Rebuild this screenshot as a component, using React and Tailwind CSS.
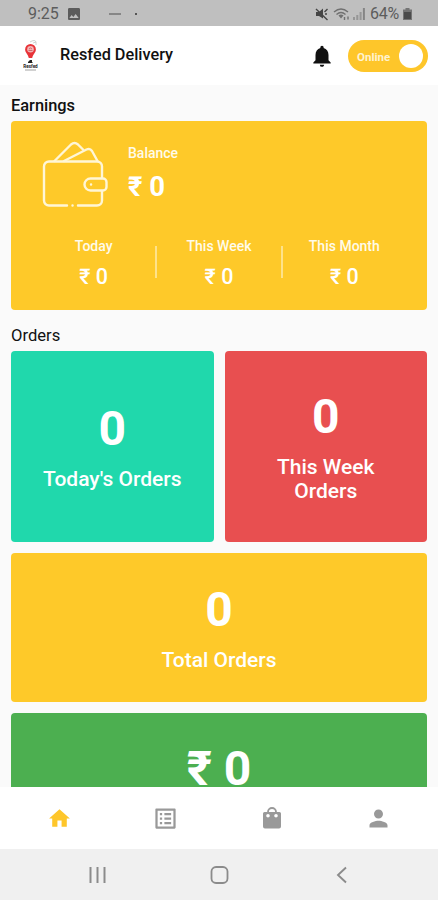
import { useState } from 'react';
import { MdHome, MdListAlt, MdNotifications, MdPerson, MdPhoto } from 'react-icons/md';

const EARNINGS = [
  { label: 'Today', value: '₹ 0' },
  { label: 'This Week', value: '₹ 0' },
  { label: 'This Month', value: '₹ 0' },
];

function BagIcon({ className }) {
  return (
    <svg className={className} viewBox="0 0 24 24" fill="none">
      <path d="M8 8V6a4 4 0 0 1 8 0v2" stroke="currentColor" strokeWidth="1.800" />
      <path
        fillRule="evenodd"
        d="M4.500 6h15A1.500 1.500 0 0 1 21 7.500v13a2 2 0 0 1-2 2H5a2 2 0 0 1-2-2v-13A1.500 1.500 0 0 1 4.500 6zM8 8a1.800 1.800 0 1 0 0 3.600A1.800 1.800 0 0 0 8 8zm8 0a1.800 1.800 0 1 0 0 3.600A1.800 1.800 0 0 0 16 8z"
        fill="currentColor"
      />
    </svg>
  );
}

const TABS = [
  { id: 'home', icon: MdHome, size: 'h-[25px] w-[25px]' },
  { id: 'orders', icon: MdListAlt, size: 'h-[27px] w-[27px]' },
  { id: 'bag', icon: BagIcon, size: 'h-6 w-6' },
  { id: 'profile', icon: MdPerson, size: 'h-[27px] w-[27px]' },
];

function StatusBar() {
  return (
    <div className="flex h-[26px] shrink-0 items-center justify-between bg-[#bfbfbf] pr-[26px] pl-7 text-[#5c5c5c]">
      <div className="flex items-center pt-[2px]">
        <span className="w-[32px] text-[16px] leading-none">9:25</span>
        <MdPhoto className="ml-[6px] h-4 w-4" />
        <span className="ml-[27px] h-[1.5px] w-3 bg-[#868686]" />
        <span className="ml-[14px] h-[2px] w-[2px] bg-[#555]" />
      </div>
      <div className="flex items-center pt-[2px]">
        <svg className="h-[13px] w-[14px]" viewBox="0 0 14 13" fill="#454545">
          <path d="M1 4h3l4-3.500v10L4 8H1z" />
          <path d="M1 1l11.500 11M9.500 4l3-3M10 6h2" stroke="#454545" strokeWidth="1.4" />
        </svg>
        <svg className="ml-[4px] h-[13px] w-[18px]" viewBox="0 0 18 13" fill="none" stroke="#707070" strokeWidth="1.4">
          <path d="M1 4q7-6 14 0M3.500 6.500q4.500-4 9 0" />
          <path d="M5.500 7.500q2.500-2 5 0L8 10.500z" fill="#707070" stroke="none" />
          <path d="M11.500 9v3M15 8.500v3" />
        </svg>
        <svg className="ml-[2px] h-[12px] w-[12px]" viewBox="0 0 12 12" fill="#858585">
          <path d="M0 9h2v3H0zM3.300 7h2v5h-2zM6.600 4h2v8h-2z" opacity=".7" />
          <path d="M9.900 0h2v12h-2z" />
        </svg>
        <span className="ml-[5px] w-[31px] text-[16px] leading-none tracking-[-0.3px]">64%</span>
        <svg className="ml-[2px] h-[12px] w-[9px]" viewBox="0 0 9 12" fill="#4b4b4b">
          <path d="M2.500 0h4v1.500H9V12H0V1.500h2.500z" opacity=".65" />
          <path d="M1 4h7v7H1z" />
        </svg>
      </div>
    </div>
  );
}

function Logo() {
  return (
    <svg className="h-8 w-4" viewBox="0 0 16 32" fill="none">
      <path d="M7 2q5-3 6 0v3M10 3l3-1" stroke="#c4c9c7" strokeWidth=".8" />
      <path d="M7.500 4a5.400 5.400 0 0 0-5.400 5.400c0 3.200 3 4.600 3.700 8.600h3.400c.7-4 3.700-5.400 3.700-8.600A5.400 5.400 0 0 0 7.500 4z" fill="#e83338" />
      <circle cx="7.500" cy="9.300" r="3.300" fill="#f2b5b6" />
      <path d="M5.500 10.500h4M6 9q1.500-2 3 0" stroke="#c9575b" strokeWidth=".8" />
      <path d="M5 22l2-2h2v2l1 1H5z" fill="#222" />
      <text x="7.500" y="28" textAnchor="middle" fontSize="4.600" fontWeight="700" fill="#222">Resfed</text>
      <path d="M2 30h11" stroke="#999" strokeWidth=".9" />
    </svg>
  );
}

function Header({ online, onToggle }) {
  return (
    <header className="flex h-[59px] shrink-0 items-center bg-white pr-[10px] pl-[23px]">
      <Logo />
      <h1 className="ml-[21px] flex-1 text-[16.3px] font-medium text-[#111]">Resfed Delivery</h1>
      <MdNotifications className="h-[26px] w-[26px] text-[#111]" />
      <button
        onClick={onToggle}
        className="ml-[13px] flex h-8 w-20 items-center justify-between rounded-full bg-[#fec62a] pr-[5px] pl-[9px]"
        aria-label="Toggle availability"
      >
        <span className="pt-[2px] text-[11.5px] leading-4 font-bold text-[#fff3cf]">{online ? 'Online' : 'Offline'}</span>
        <span className="h-6 w-6 rounded-full bg-white" />
      </button>
    </header>
  );
}

function Wallet() {
  return (
    <svg className="h-[68px] w-[66px]" viewBox="0 0 66 68" fill="none" stroke="#fff6d6" strokeWidth="2.400" strokeLinecap="round" strokeLinejoin="round">
      <path d="M25 64.500H7a5 5 0 0 1-5-5v-34a5 5 0 0 1 5-5h48a5 5 0 0 1 5 5V37M60 50v9.500a5 5 0 0 1-5 5H36M30.500 64.500h.1" />
      <path d="M12.500 20L29 3.500q3.500-3 7 0l5 5M22 20L44.500 8.500q3.500-1.500 5.500 1.500L55.500 20" />
      <path d="M61 37.500H48.500a6 6 0 0 0 0 12H61a3.500 3.500 0 0 0 3.500-3.500v-5a3.500 3.500 0 0 0-3.500-3.500zM49 43.500h.1" />
    </svg>
  );
}

function EarningsCard() {
  return (
    <section className="h-[189px] shrink-0 rounded-[4px] bg-[#fec929] px-5 pt-5 text-[#fffbea]">
      <div className="flex h-[68px] pl-[11px]">
        <Wallet />
        <div className="pt-[3px] pl-5">
          <div className="text-[14px] leading-[18px] font-medium">Balance</div>
          <div className="mt-[9px] text-[27.5px] leading-8 font-bold text-white">₹ 0</div>
        </div>
      </div>
      <div className="mt-[29px] flex items-center">
        {EARNINGS.map((e, i) => (
          <div key={e.label} className={`relative flex flex-1 flex-col items-center ${i > 0 ? 'before:absolute before:top-[8px] before:left-[-1px] before:h-8 before:w-[2px] before:bg-[#fee28a]' : ''}`}>
            <span className="text-[14px] leading-4 font-medium">{e.label}</span>
            <span className="mt-[11px] text-[21.5px] leading-6 font-medium text-white">{e.value}</span>
          </div>
        ))}
      </div>
    </section>
  );
}

function OrderCard({ value, label, className }) {
  return (
    <div className={`flex shrink-0 flex-col items-center rounded-[4px] text-center text-white ${className}`}>
      <span className="text-[48px] leading-9 font-bold">{value}</span>
      {label && <span className="mt-[20px] max-w-[139px] text-[21px] leading-6 font-medium">{label}</span>}
    </div>
  );
}

function TabBar({ active, onChange }) {
  return (
    <nav className="flex h-[62px] shrink-0 items-center bg-white px-[6px]">
      {TABS.map(({ id, icon: Icon, size }) => (
        <button key={id} onClick={() => onChange(id)} className="flex flex-1 justify-center" aria-label={id}>
          <Icon className={`${size} ${active === id ? 'text-[#fec62a]' : 'text-[#999]'}`} />
        </button>
      ))}
    </nav>
  );
}

function SystemBar() {
  return (
    <div className="flex h-[51px] shrink-0 items-center justify-between bg-[#f0f0f0] px-[89px]">
      <svg className="h-5 w-[17px]" viewBox="0 0 17 20" stroke="#8b8b8b" strokeWidth="2">
        <path d="M1.500 2v16M8.500 2v16M15.500 2v16" />
      </svg>
      <svg className="h-5 w-[19px]" viewBox="0 0 19 20" fill="none" stroke="#8b8b8b" strokeWidth="1.800">
        <rect x="1.500" y="2" width="16" height="16" rx="4.500" />
      </svg>
      <svg className="h-5 w-[17px]" viewBox="0 0 17 20" fill="none" stroke="#8b8b8b" strokeWidth="1.900">
        <path d="M14 2.500L6 10l8 7.500" />
      </svg>
    </div>
  );
}

export default function App() {
  const [online, setOnline] = useState(true);
  const [tab, setTab] = useState('home');

  return (
    <div className="flex h-[900px] w-[438px] flex-col overflow-hidden bg-[#fafafa] font-['Roboto','Noto_Sans',sans-serif]">
      <StatusBar />
      <Header online={online} onToggle={() => setOnline(!online)} />
      <main className="flex min-h-0 flex-1 flex-col overflow-hidden px-[11px] pt-[9px]">
        <h2 className="mb-[3px] text-[16.4px] leading-6 font-medium text-[#111]">Earnings</h2>
        <EarningsCard />
        <h2 className="mt-[14px] mb-[3px] text-[16.6px] leading-6 text-[#111]">Orders</h2>
        <div className="grid shrink-0 grid-cols-2 gap-[11px]">
          <OrderCard value="0" label="Today's Orders" className="h-[191px] bg-[#20d8ac] pt-[60px]" />
          <OrderCard value="0" label="This Week Orders" className="h-[191px] bg-[#e84f50] pt-[48px]" />
        </div>
        <OrderCard value="0" label="Total Orders" className="mt-[11px] h-[149px] bg-[#fec929] pt-[39px]" />
        <OrderCard value="₹ 0" className="mt-[11px] h-[149px] bg-[#4caf50] pt-[38px]" />
      </main>
      <TabBar active={tab} onChange={setTab} />
      <SystemBar />
    </div>
  );
}
